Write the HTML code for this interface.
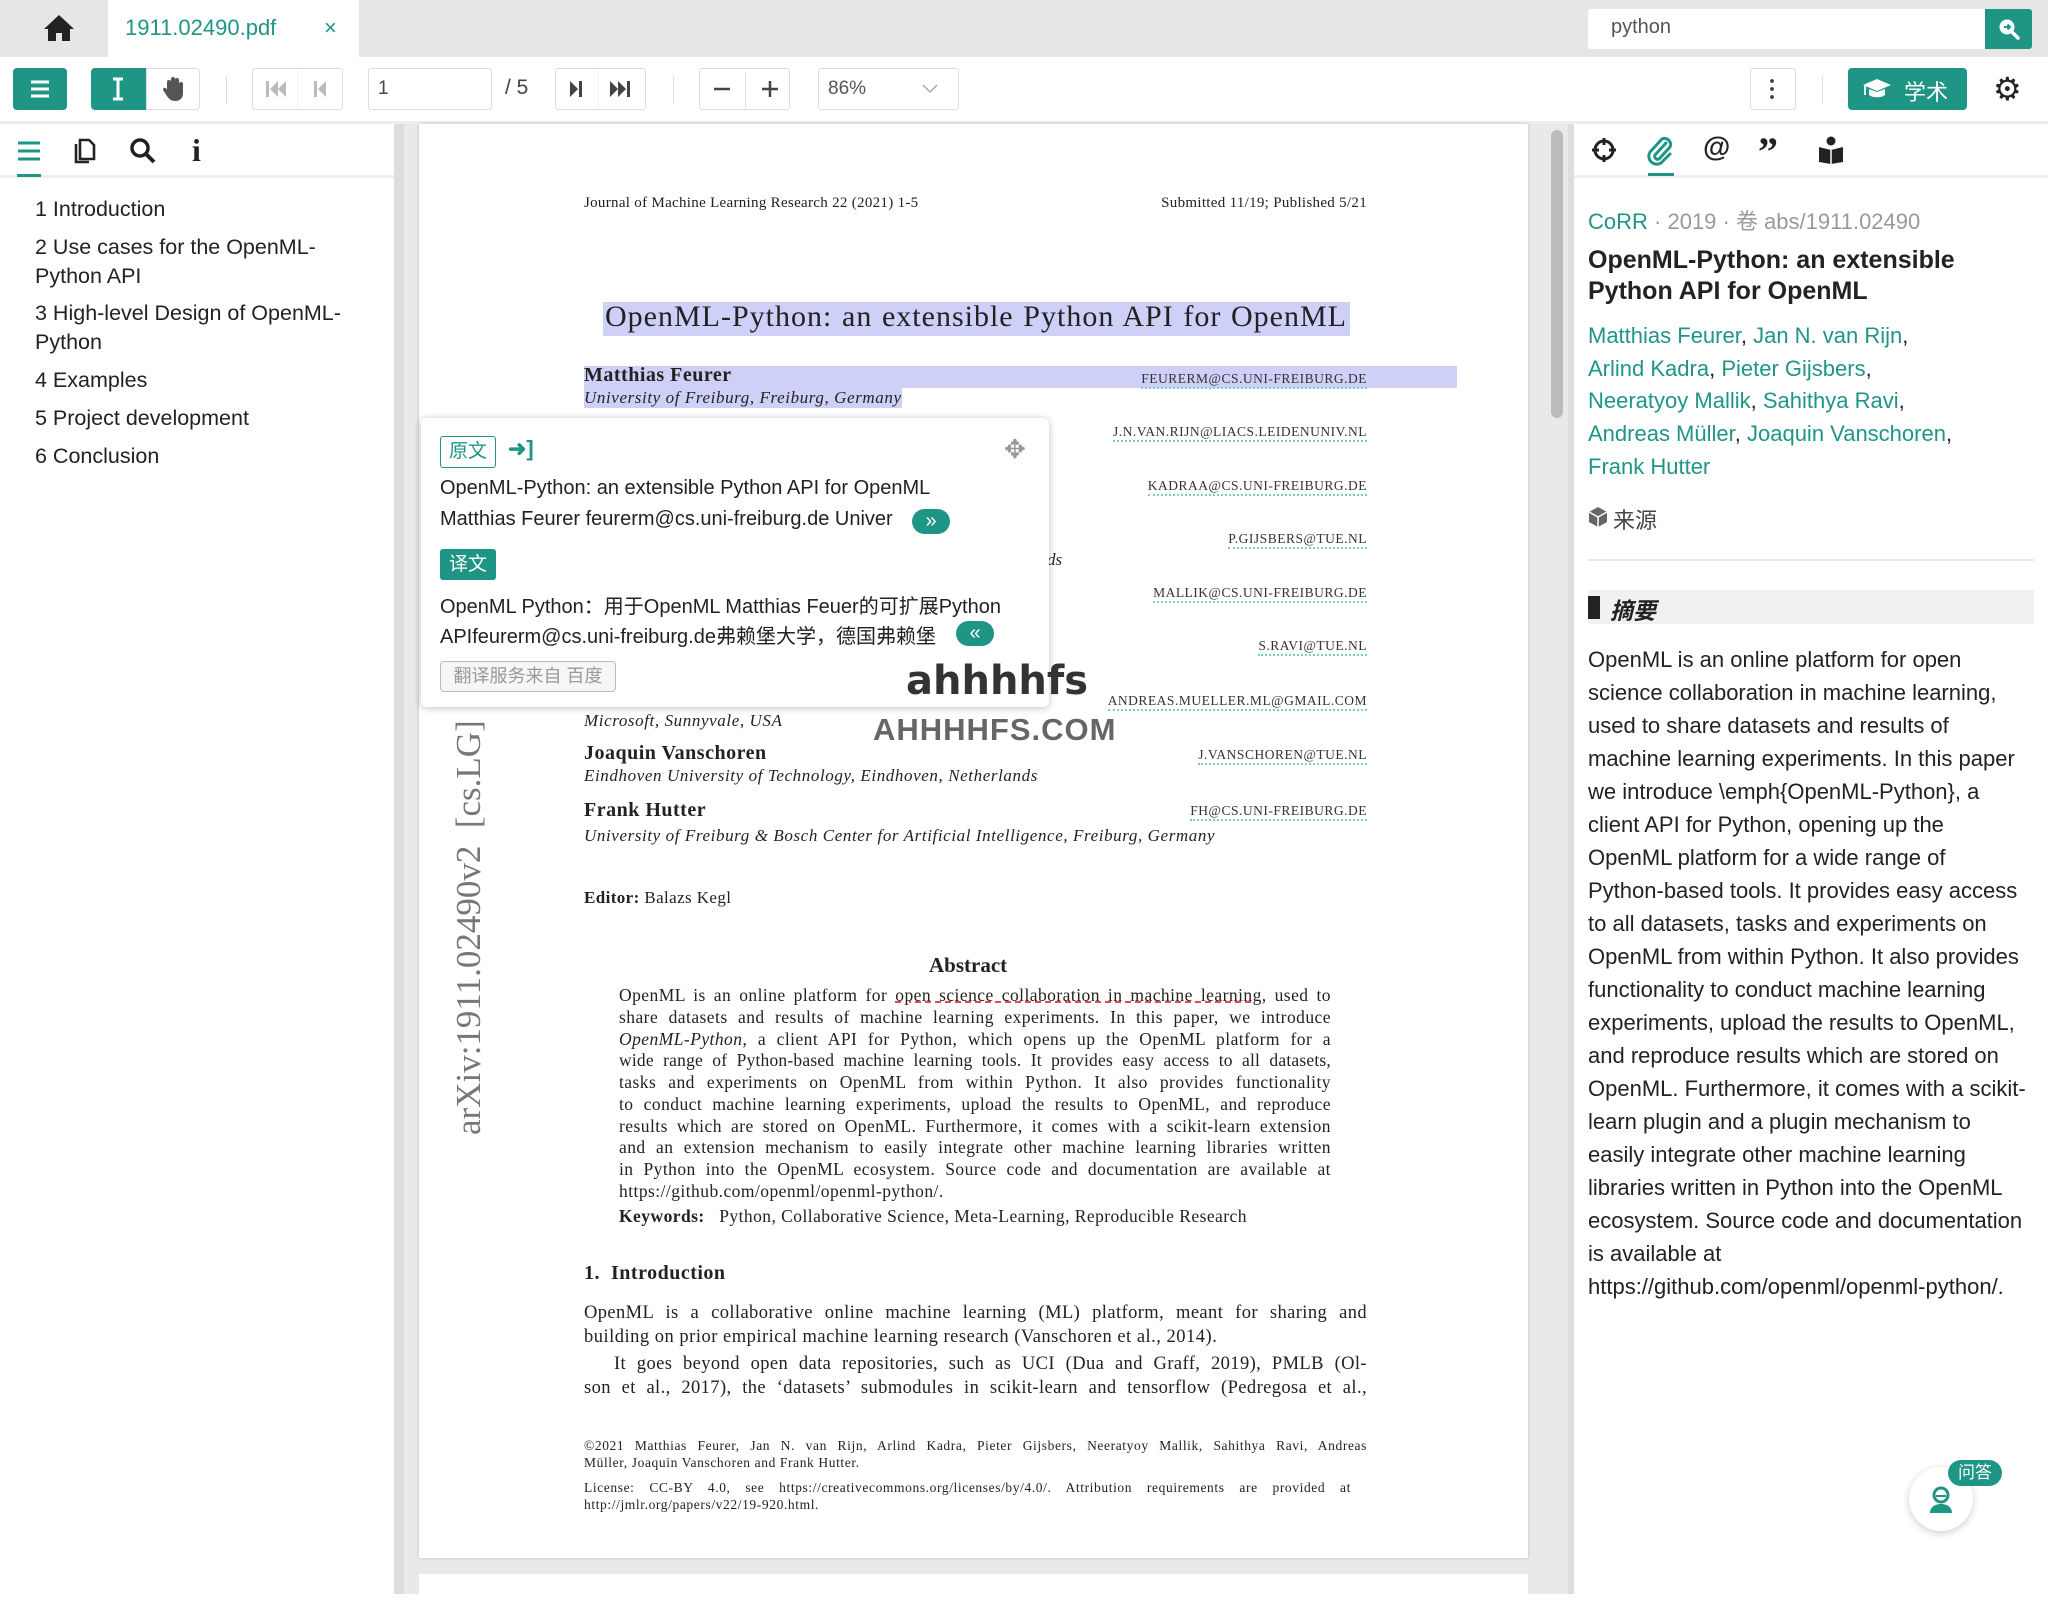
<!DOCTYPE html>
<html><head><meta charset="utf-8">
<style>
*{margin:0;padding:0;box-sizing:border-box}
body{width:2048px;height:1594px;position:relative;overflow:hidden;background:#fff;font-family:"Liberation Sans","Noto Sans CJK SC",sans-serif;color:#222}
.a{position:absolute;white-space:nowrap}
.s{font-family:"Liberation Serif","Noto Serif CJK SC",serif;color:#222}
.j{text-align:justify;text-align-last:justify}
.btn{position:absolute;top:68px;height:42px;border:1px solid #ddd;border-radius:3px;background:#fff}
.t{color:#1f9585}
.em{position:absolute;right:681px;white-space:nowrap;font-family:"Liberation Serif",serif;text-transform:uppercase;font-size:13.5px;letter-spacing:.5px;border-bottom:2px dotted #7cc;line-height:17px;color:#333}
.ab{position:absolute;left:619px;width:712px;font-size:17.5px;white-space:nowrap;letter-spacing:.45px}
.rp div{height:33px}
</style></head><body>
<!-- tab bar -->
<div class="a" style="left:0;top:0;width:2048px;height:57px;background:#e6e6e6"></div>
<svg class="a" style="left:43px;top:14px" width="32" height="28" viewBox="0 0 32 28"><path d="M16 1L1 15h4v12h8v-8h6v8h8V15h4z" fill="#222"/></svg>
<div class="a" style="left:108px;top:0;width:251px;height:57px;background:#fff"></div>
<div class="a t" style="left:125px;top:15px;font-size:22px">1911.02490.pdf</div>
<div class="a" style="left:324px;top:15px;font-size:22px;color:#1f9585">×</div>
<div class="a" style="left:1588px;top:9px;width:400px;height:40px;background:#fff;border-radius:3px 0 0 3px"></div>
<div class="a" style="left:1611px;top:16px;font-size:20px;color:#555">python</div>
<div class="a" style="left:1985px;top:9px;width:47px;height:40px;background:#1f9585;border-radius:0 3px 3px 0"></div>
<svg class="a" style="left:1997px;top:17px" width="24" height="24" viewBox="0 0 24 24"><circle cx="10" cy="10" r="7.5" fill="#fff"/><path d="M15 15l6 6" stroke="#fff" stroke-width="3.5" stroke-linecap="round"/><path d="M7 10h6M10.5 7.5L13 10l-2.5 2.5" stroke="#1f9585" stroke-width="2" fill="none"/></svg>
<!-- toolbar -->
<div class="a" style="left:0;top:121px;width:2048px;height:3px;background:#eee"></div>
<div class="a" style="left:13px;top:68px;width:54px;height:42px;background:#1f9585;border-radius:4px"></div>
<svg class="a" style="left:30px;top:79px" width="20" height="20"><path d="M1 3h18M1 10h18M1 17h18" stroke="#fff" stroke-width="3"/></svg>
<div class="a" style="left:91px;top:68px;width:55px;height:42px;background:#1f9585;border-radius:4px 0 0 4px"></div>
<svg class="a" style="left:111px;top:77px" width="14" height="24"><path d="M2 2h10M2 22h10M7 2v20" stroke="#fff" stroke-width="3"/></svg>
<div class="btn" style="left:146px;width:54px;border-radius:0 4px 4px 0"></div>
<svg class="a" style="left:161px;top:76px" width="24" height="26" viewBox="0 0 24 26"><path d="M6 14V6a2 2 0 014 0v6V3a2 2 0 014 0v9V4a2 2 0 014 0v9V8a2 2 0 014 0v9c0 5-3 8-8 8-4 0-6-2-8-5l-4-6a2 2 0 013-2z" fill="#555"/></svg>
<div class="a" style="left:226px;top:76px;width:1px;height:28px;background:#ddd"></div>
<div class="btn" style="left:252px;width:91px"></div>
<div class="a" style="left:297px;top:70px;width:1px;height:38px;background:#eee"></div>
<svg class="a" style="left:264px;top:80px" width="70" height="18"><path d="M2 1h3v16H2zM14 1L6 9l8 8zM22 1l-8 8 8 8zM50 1h3v16h-3zM62 1l-8 8 8 8z" fill="#bbb"/></svg>
<div class="btn" style="left:368px;width:124px"></div>
<div class="a" style="left:378px;top:78px;font-size:19px;color:#444">1</div>
<div class="a" style="left:505px;top:76px;font-size:21px;color:#444">/ 5</div>
<div class="btn" style="left:555px;width:91px"></div>
<div class="a" style="left:598px;top:70px;width:1px;height:38px;background:#eee"></div>
<svg class="a" style="left:568px;top:80px" width="70" height="18"><path d="M2 1l8 8-8 8zM11 1h3v16h-3zM42 1l8 8-8 8zM50 1l8 8-8 8zM59 1h3v16h-3z" fill="#444"/></svg>
<div class="a" style="left:673px;top:76px;width:1px;height:28px;background:#ddd"></div>
<div class="btn" style="left:699px;width:91px"></div>
<div class="a" style="left:745px;top:72px;width:1px;height:36px;background:#ddd"></div>
<svg class="a" style="left:712px;top:80px" width="68" height="18"><path d="M2 9h16M50 9h16M58 1v16" stroke="#444" stroke-width="2.5"/></svg>
<div class="btn" style="left:818px;width:141px"></div>
<div class="a" style="left:828px;top:78px;font-size:19px;color:#555">86%</div>
<svg class="a" style="left:922px;top:84px" width="16" height="10"><path d="M1 1l7 7 7-7" stroke="#aaa" stroke-width="1.5" fill="none"/></svg>
<div class="btn" style="left:1750px;width:46px"></div>
<div class="a" style="left:1770px;top:77px;width:4px;height:24px;background:radial-gradient(circle,#444 1.8px,transparent 2px) 0 0/4px 8px"></div>
<div class="a" style="left:1822px;top:76px;width:1px;height:28px;background:#ddd"></div>
<div class="a" style="left:1848px;top:68px;width:119px;height:42px;background:#1f9585;border-radius:4px"></div>
<svg class="a" style="left:1862px;top:78px" width="30" height="22" viewBox="0 0 30 22"><path d="M15 1L1 7l14 6 14-6z" fill="#fff"/><path d="M7 11v6c4 3 12 3 16 0v-6l-8 3z" fill="#fff"/><path d="M3 8v9" stroke="#fff" stroke-width="2"/></svg>
<div class="a" style="left:1904px;top:75px;font-size:22px;color:#fff">学术</div>
<div class="a" style="left:1993px;top:70px;font-size:32px;color:#222">⚙</div>
<!-- left panel -->
<div class="a" style="left:394px;top:124px;width:1180px;height:1470px;background:#e9e9e9"></div>
<div class="a" style="left:394px;top:124px;width:10px;height:1470px;background:#ddd"></div>
<svg class="a" style="left:17px;top:140px" width="24" height="22"><path d="M1 3h22M1 11h22M1 19h22" stroke="#1f9585" stroke-width="3"/></svg>
<div class="a" style="left:0;top:175px;width:394px;height:3px;background:#eee"></div>
<div class="a" style="left:17px;top:174px;width:24px;height:3px;background:#1f9585"></div>
<svg class="a" style="left:71px;top:137px" width="26" height="28" viewBox="0 0 26 28"><path d="M9 3h9l5 5v14H9z M5 7v18h13" fill="none" stroke="#222" stroke-width="2.6"/></svg>
<svg class="a" style="left:129px;top:137px" width="28" height="28"><circle cx="11" cy="11" r="8" fill="none" stroke="#222" stroke-width="3.5"/><path d="M17 17l8 8" stroke="#222" stroke-width="4"/></svg>
<div class="a" style="left:192px;top:132px;font-size:32px;font-weight:bold;font-family:'Liberation Serif',serif">i</div>
<div class="a" style="left:35px;top:195px;font-size:21.5px;line-height:29px;color:#222">1 Introduction</div>
<div class="a" style="left:35px;top:233px;font-size:21.5px;line-height:29px">2 Use cases for the OpenML-<br>Python API</div>
<div class="a" style="left:35px;top:299px;font-size:21.5px;line-height:29px">3 High-level Design of OpenML-<br>Python</div>
<div class="a" style="left:35px;top:366px;font-size:21.5px;line-height:29px">4 Examples</div>
<div class="a" style="left:35px;top:404px;font-size:21.5px;line-height:29px">5 Project development</div>
<div class="a" style="left:35px;top:442px;font-size:21.5px;line-height:29px">6 Conclusion</div>
<!-- pdf page -->
<div class="a" style="left:419px;top:124px;width:1109px;height:1434px;background:#fff;box-shadow:0 0 3px #bbb"></div>
<div class="a" style="left:419px;top:1574px;width:1109px;height:30px;background:#fff"></div>
<div class="a" style="left:1551px;top:130px;width:12px;height:288px;background:#bbb;border-radius:6px"></div>
<div class="a" style="left:1568px;top:124px;width:6px;height:1470px;background:#ddd"></div>
<div class="a s" style="left:584px;top:195px;font-size:15px;letter-spacing:.3px">Journal of Machine Learning Research 22 (2021) 1-5</div>
<div class="a s" style="right:681px;top:195px;font-size:15px;letter-spacing:.3px">Submitted 11/19; Published 5/21</div>
<div class="a" style="left:603px;top:302px;width:747px;height:34px;background:#cfd0f7"></div>
<div class="a s j" style="left:605px;top:300px;font-size:30px;width:742px;letter-spacing:1px">OpenML-Python: an extensible Python API for OpenML</div>
<div class="a" style="left:584px;top:366px;width:873px;height:22px;background:#cfd0f7"></div>
<div class="a s" style="left:584px;top:364px;font-size:20px;font-weight:bold;letter-spacing:.5px">Matthias Feurer</div>
<div class="em" style="top:370px">feurerm@cs.uni-freiburg.de</div>
<div class="a s" style="left:584px;top:388px;font-size:17px;font-style:italic;background:#cfd0f7;letter-spacing:.6px">University of Freiburg, Freiburg, Germany</div>
<div class="em" style="top:423px">j.n.van.rijn@liacs.leidenuniv.nl</div>
<div class="em" style="top:477px">kadraa@cs.uni-freiburg.de</div>
<div class="em" style="top:530px">p.gijsbers@tue.nl</div>
<div class="a s" style="left:1047px;top:550px;font-size:17px;font-style:italic">ds</div>
<div class="em" style="top:584px">mallik@cs.uni-freiburg.de</div>
<div class="em" style="top:637px">s.ravi@tue.nl</div>
<div class="em" style="top:692px">andreas.mueller.ml@gmail.com</div>
<div class="a s" style="left:584px;top:711px;font-size:17px;font-style:italic;letter-spacing:.6px">Microsoft, Sunnyvale, USA</div>
<div class="a s" style="left:584px;top:742px;font-size:20px;font-weight:bold;letter-spacing:.5px">Joaquin Vanschoren</div>
<div class="em" style="top:746px">j.vanschoren@tue.nl</div>
<div class="a s" style="left:584px;top:766px;font-size:17px;font-style:italic;letter-spacing:.6px">Eindhoven University of Technology, Eindhoven, Netherlands</div>
<div class="a s" style="left:584px;top:799px;font-size:20px;font-weight:bold;letter-spacing:.5px">Frank Hutter</div>
<div class="em" style="top:802px">fh@cs.uni-freiburg.de</div>
<div class="a s" style="left:584px;top:826px;font-size:17px;font-style:italic;letter-spacing:.6px">University of Freiburg &amp; Bosch Center for Artificial Intelligence, Freiburg, Germany</div>
<div class="a s" style="left:449px;top:1135px;font-size:35px;color:#777;transform:rotate(-90deg);transform-origin:0 0">arXiv:1911.02490v2&nbsp; [cs.LG]</div>
<div class="a s" style="left:584px;top:888px;font-size:17px;letter-spacing:.4px"><b>Editor:</b> Balazs Kegl</div>
<div class="a s" style="left:929px;top:953px;font-size:21px;font-weight:bold">Abstract</div>
<div class="s">
<div class="ab j" style="top:985px">OpenML is an online platform for <u style="text-decoration:underline dashed #d33">open science collaboration in machine learning</u>, used to</div>
<div class="ab j" style="top:1007px">share datasets and results of machine learning experiments. In this paper, we introduce</div>
<div class="ab j" style="top:1029px"><i>OpenML-Python</i>, a client API for Python, which opens up the OpenML platform for a</div>
<div class="ab j" style="top:1050px;letter-spacing:.2px">wide range of Python-based machine learning tools. It provides easy access to all datasets,</div>
<div class="ab j" style="top:1072px">tasks and experiments on OpenML from within Python. It also provides functionality</div>
<div class="ab j" style="top:1094px">to conduct machine learning experiments, upload the results to OpenML, and reproduce</div>
<div class="ab j" style="top:1116px">results which are stored on OpenML. Furthermore, it comes with a scikit-learn extension</div>
<div class="ab j" style="top:1137px">and an extension mechanism to easily integrate other machine learning libraries written</div>
<div class="ab j" style="top:1159px">in Python into the OpenML ecosystem. Source code and documentation are available at</div>
<div class="ab" style="top:1181px">https://github.com/openml/openml-python/.</div>
<div class="ab" style="top:1206px"><b>Keywords:</b>&nbsp;&nbsp; Python, Collaborative Science, Meta-Learning, Reproducible Research</div>
</div>
<div class="a s" style="left:584px;top:1262px;font-size:20px;font-weight:bold;letter-spacing:.5px">1.&nbsp; Introduction</div>
<div class="a s j" style="left:584px;top:1303px;width:783px;font-size:18.5px;letter-spacing:.4px">OpenML is a collaborative online machine learning (ML) platform, meant for sharing and</div>
<div class="a s" style="left:584px;top:1327px;font-size:18.5px;letter-spacing:.5px">building on prior empirical machine learning research (Vanschoren et al., 2014).</div>
<div class="a s j" style="left:614px;top:1354px;width:753px;font-size:18.5px;letter-spacing:.4px">It goes beyond open data repositories, such as UCI (Dua and Graff, 2019), PMLB (Ol-</div>
<div class="a s j" style="left:584px;top:1378px;width:783px;font-size:18.5px;letter-spacing:.4px">son et al., 2017), the ‘datasets’ submodules in scikit-learn and tensorflow (Pedregosa et al.,</div>
<div class="a s j" style="left:584px;top:1438px;width:783px;font-size:13.5px;letter-spacing:.6px">©2021 Matthias Feurer, Jan N. van Rijn, Arlind Kadra, Pieter Gijsbers, Neeratyoy Mallik, Sahithya Ravi, Andreas</div>
<div class="a s" style="left:584px;top:1455px;font-size:13.5px;letter-spacing:.6px">Müller, Joaquin Vanschoren and Frank Hutter.</div>
<div class="a s j" style="left:584px;top:1480px;width:767px;font-size:13.5px;letter-spacing:.6px">License: CC-BY 4.0, see https://creativecommons.org/licenses/by/4.0/. Attribution requirements are provided at</div>
<div class="a s" style="left:584px;top:1497px;font-size:13.5px;letter-spacing:.6px">http://jmlr.org/papers/v22/19-920.html.</div>
<!-- popup -->
<div class="a" style="left:421px;top:418px;width:628px;height:289px;background:#fff;border-radius:6px;box-shadow:0 1px 8px rgba(0,0,0,.25)"></div>
<div class="a" style="left:440px;top:436px;width:56px;height:32px;border:1.5px solid #1f9585;border-radius:3px;color:#1f9585;font-size:19px;text-align:center;line-height:29px">原文</div>
<div class="a t" style="left:508px;top:436px;font-size:22px;font-weight:bold">➜]</div>
<div class="a" style="left:1004px;top:434px;font-size:26px;color:#999">✥</div>
<div class="a" style="left:440px;top:477px;font-size:20px;color:#222">OpenML-Python: an extensible Python API for OpenML</div>
<div class="a" style="left:440px;top:508px;font-size:20px;color:#222">Matthias Feurer feurerm@cs.uni-freiburg.de Univer</div>
<div class="a" style="left:912px;top:509px;width:38px;height:25px;background:#1f9585;border-radius:13px;color:#fff;font-size:20px;text-align:center;line-height:24px">»</div>
<div class="a" style="left:440px;top:549px;width:56px;height:31px;background:#1f9585;border-radius:3px;color:#fff;font-size:19px;text-align:center;line-height:31px">译文</div>
<div class="a" style="left:440px;top:590px;font-size:20px;color:#222">OpenML Python：用于OpenML Matthias Feuer的可扩展Python</div>
<div class="a" style="left:440px;top:620px;font-size:20px;color:#222">APIfeurerm@cs.uni-freiburg.de弗赖堡大学，德国弗赖堡</div>
<div class="a" style="left:956px;top:621px;width:38px;height:25px;background:#1f9585;border-radius:13px;color:#fff;font-size:20px;text-align:center;line-height:24px">«</div>
<div class="a" style="left:440px;top:661px;width:176px;height:31px;border:1.5px solid #bbb;border-radius:4px;background:#f6f6f6;color:#999;font-size:18px;text-align:center;line-height:28px">翻译服务来自 百度</div>
<!-- watermark -->
<div class="a" style="left:906px;top:658px;font-size:40px;font-weight:bold;color:#333;font-family:'DejaVu Sans',sans-serif">ahhhhfs</div>
<div class="a" style="left:873px;top:712px;font-size:31px;font-weight:bold;color:#666;letter-spacing:1px">AHHHHFS.COM</div>
<!-- right panel -->
<svg class="a" style="left:1591px;top:137px" width="26" height="26"><circle cx="13" cy="13" r="9" fill="none" stroke="#222" stroke-width="3"/><path d="M13 1v7M13 18v7M1 13h7M18 13h7" stroke="#222" stroke-width="3"/></svg>
<svg class="a" style="left:1647px;top:134px" width="26" height="32" viewBox="0 0 26 32"><path d="M19 9L8 21a3 3 0 004 4l11-12a6 6 0 00-8-8L3 18a8 8 0 0011 11l9-9" fill="none" stroke="#1f9585" stroke-width="3" stroke-linecap="round"/></svg>
<div class="a" style="left:1703px;top:131px;font-size:28px;font-weight:bold">@</div>
<div class="a" style="left:1758px;top:128px;font-size:40px;font-weight:bold;font-family:'Liberation Serif',serif">”</div>
<svg class="a" style="left:1818px;top:136px" width="26" height="28"><circle cx="13" cy="5" r="4.5" fill="#222"/><path d="M1 11l12 3 12-3v15l-12 2-12-2z" fill="#222"/><path d="M13 14v14" stroke="#fff" stroke-width="1.5"/></svg>
<div class="a" style="left:1574px;top:175px;width:474px;height:3px;background:#eee"></div>
<div class="a" style="left:1648px;top:173px;width:26px;height:3px;background:#1f9585"></div>
<div class="a" style="left:1588px;top:204px;font-size:22px;color:#999"><span class="t">CoRR</span> · 2019 · 卷 abs/1911.02490</div>
<div class="a" style="left:1588px;top:245px;font-size:25px;font-weight:bold;line-height:31px;color:#222">OpenML-Python: an extensible<br>Python API for OpenML</div>
<div class="a" style="left:1588px;top:320px;font-size:22px;line-height:32.7px;color:#222"><span class="t">Matthias Feurer</span>, <span class="t">Jan N. van Rijn</span>,<br><span class="t">Arlind Kadra</span>, <span class="t">Pieter Gijsbers</span>,<br><span class="t">Neeratyoy Mallik</span>, <span class="t">Sahithya Ravi</span>,<br><span class="t">Andreas Müller</span>, <span class="t">Joaquin Vanschoren</span>,<br><span class="t">Frank Hutter</span></div>
<svg class="a" style="left:1588px;top:506px" width="20" height="22" viewBox="0 0 20 22"><path d="M10 1l9 5v10l-9 5-9-5V6z" fill="#666"/><path d="M1 6l9 5 9-5M10 11v10" stroke="#fff" stroke-width="1.5" fill="none"/></svg>
<div class="a" style="left:1613px;top:503px;font-size:22px;color:#444">来源</div>
<div class="a" style="left:1588px;top:559px;width:446px;height:2px;background:#e8e8e8"></div>
<div class="a" style="left:1588px;top:590px;width:446px;height:34px;background:#f1f1f1"></div>
<div class="a" style="left:1588px;top:596px;width:12px;height:23px;background:#222"></div>
<div class="a" style="left:1610px;top:592px;font-size:23px;font-weight:bold;font-style:italic">摘要</div>
<div class="a rp" style="left:1588px;top:643px;font-size:22px;line-height:33px;color:#222">
<div>OpenML is an online platform for open</div>
<div>science collaboration in machine learning,</div>
<div>used to share datasets and results of</div>
<div>machine learning experiments. In this paper</div>
<div>we introduce \emph{OpenML-Python}, a</div>
<div>client API for Python, opening up the</div>
<div>OpenML platform for a wide range of</div>
<div>Python-based tools. It provides easy access</div>
<div>to all datasets, tasks and experiments on</div>
<div>OpenML from within Python. It also provides</div>
<div>functionality to conduct machine learning</div>
<div>experiments, upload the results to OpenML,</div>
<div>and reproduce results which are stored on</div>
<div>OpenML. Furthermore, it comes with a scikit-</div>
<div>learn plugin and a plugin mechanism to</div>
<div>easily integrate other machine learning</div>
<div>libraries written in Python into the OpenML</div>
<div>ecosystem. Source code and documentation</div>
<div>is available at</div>
<div>https://github.com/openml/openml-python/.</div>
</div>
<div class="a" style="left:1909px;top:1467px;width:64px;height:64px;border-radius:32px;background:#fff;box-shadow:0 2px 8px rgba(0,0,0,.2)"></div>
<svg class="a" style="left:1927px;top:1484px" width="28" height="30" viewBox="0 0 28 30"><circle cx="14" cy="11" r="7" fill="none" stroke="#1f9585" stroke-width="3"/><path d="M9 12h10" stroke="#1f9585" stroke-width="2"/><path d="M3 29c0-6 5-9 11-9s11 3 11 9" fill="#1f9585"/></svg>
<div class="a" style="left:1948px;top:1460px;width:54px;height:26px;background:#1f9585;border-radius:13px;color:#fff;font-size:17px;text-align:center;line-height:26px">问答</div>
</body></html>
